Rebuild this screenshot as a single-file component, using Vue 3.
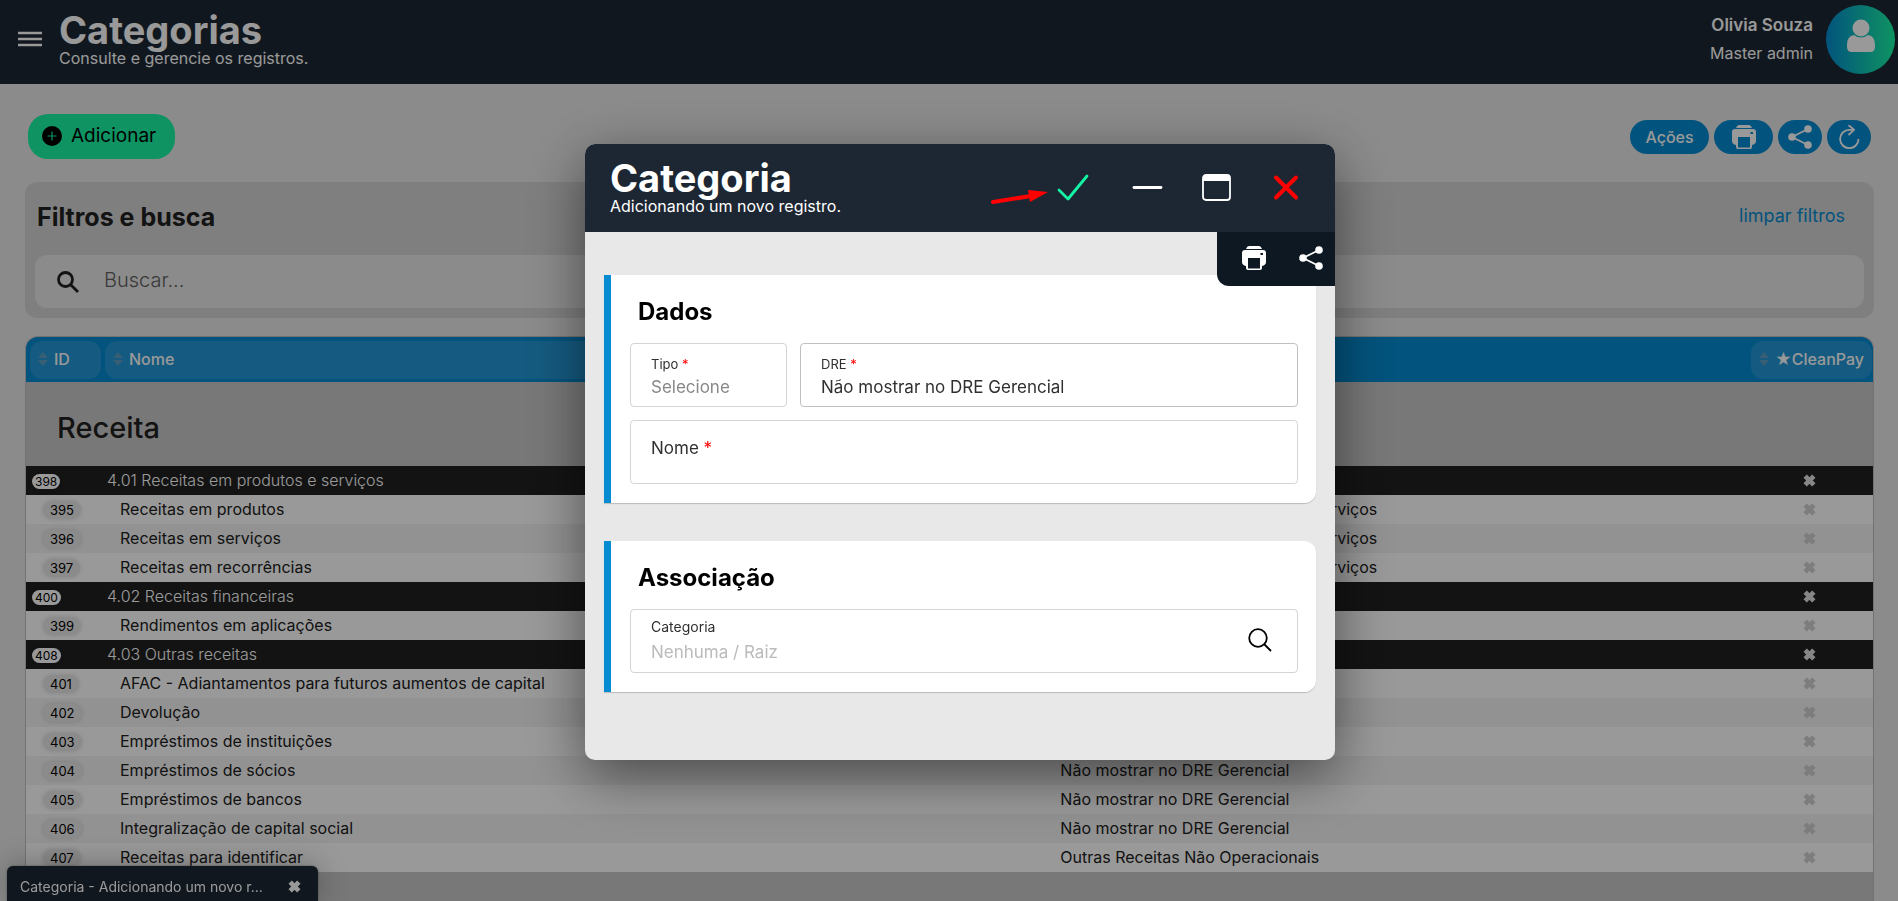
<!--============================================================ ...
    Categorias: list page + "new record" window
... ============================================================ -->

<template>
  <svg class="sprite" aria-hidden="true">
    <symbol id="i-print" viewBox="0 0 24 24">
      <path d="M4 3 Q5 0 7 0 H17 Q19 0 20 3 Z" fill="currentColor" />
      <path d="M3 4 H21 Q24 4 24 7 V16 Q24 19 20 20 V22 Q20 24 18 24 H6 Q4 24 4 22 V20 Q0 19 0 16 V7 Q0 4 3 4 Z M6 12 V22.5 H18 V12 Z M18.5 7 V9 H21 V7 Z" fill="currentColor" fill-rule="evenodd" />
    </symbol>
    <symbol id="i-share" viewBox="0 0 24 24">
      <path d="M20 4 L4 12 L20 20" fill="none" stroke="currentColor" stroke-width="1.8" />
      <circle cx="20" cy="4" r="3.8" fill="currentColor" />
      <circle cx="4" cy="12" r="3.8" fill="currentColor" />
      <circle cx="20" cy="20" r="3.8" fill="currentColor" />
    </symbol>
    <symbol id="i-times" viewBox="0 0 12 12">
      <path d="M2 2 L10 10 M10 2 L2 10" stroke="currentColor" stroke-width="4.4" />
    </symbol>
    <symbol id="i-sort" viewBox="0 0 10 14">
      <path d="M0 6 L5 0 L10 6 Z M0 8 L5 14 L10 8 Z" fill="currentColor" />
    </symbol>
  </svg>

  <div class="page">
    <header class="topbar">
      <button class="menu" aria-label="Menu">
        <svg viewBox="0 0 24 16"><path d="M0 2 H24 M0 8 H24 M0 14 H24" stroke="currentColor" stroke-width="2.4" /></svg>
      </button>
      <div class="heading">
        <h1>Categorias</h1>
        <p>Consulte e gerencie os registros.</p>
      </div>
      <div class="user">
        <strong>Olivia Souza</strong>
        <span>Master admin</span>
      </div>
      <div class="avatar">
        <svg viewBox="0 0 28 34">
          <circle cx="14" cy="9" r="8.5" fill="currentColor" />
          <path d="M7 16 Q14 21 21 16 Q28 17 28 26 V28 Q28 33 23 33 H5 Q0 33 0 28 V26 Q0 17 7 16 Z" fill="currentColor" />
        </svg>
      </div>
    </header>

    <main class="content">
      <div class="actions">
        <button class="add">
          <svg viewBox="0 0 20 20">
            <circle cx="10" cy="10" r="10" fill="#000" />
            <path d="M10 5.5 V14.5 M5.5 10 H14.5" stroke="#19f5a3" stroke-width="1.2" />
          </svg>
          Adicionar
        </button>
        <button class="pill wide">Ações</button>
        <button class="pill print" aria-label="Imprimir"><svg><use href="#i-print" /></svg></button>
        <button class="pill" aria-label="Compartilhar"><svg><use href="#i-share" /></svg></button>
        <button class="pill" aria-label="Atualizar">
          <svg viewBox="0 0 24 24" fill="none" stroke="currentColor" stroke-width="1.8">
            <path d="M21.5 14 A9.2 9.2 0 1 1 12.3 4.8 H17" />
            <path d="M11.5 0 L17 4.8 L11.5 10" />
          </svg>
        </button>
      </div>

      <section class="filters">
        <div class="filters-head">
          <h2>Filtros e busca</h2>
          <a href="#">limpar filtros</a>
        </div>
        <label class="search">
          <svg viewBox="0 0 22 22" fill="none" stroke="currentColor" stroke-width="2.8">
            <circle cx="8.5" cy="8.5" r="7" /><path d="M13.5 13.5 L21 21" />
          </svg>
          <input v-model="search" type="text" placeholder="Buscar..." aria-label="Buscar" />
        </label>
      </section>

      <div class="list">
        <table>
          <thead>
            <tr>
              <th class="col-id"><div><svg><use href="#i-sort" /></svg>ID</div></th>
              <th class="col-name"><div><svg><use href="#i-sort" /></svg>Nome</div></th>
              <th class="col-dre"><div><svg><use href="#i-sort" /></svg>DRE</div></th>
              <th class="col-pay"><div><svg><use href="#i-sort" /></svg>★CleanPay</div></th>
            </tr>
          </thead>
          <tbody>
            <tr class="root"><td colspan="4">Receita</td></tr>
            <tr v-for="row in rows" :key="row.id" :class="{ group: row.group }">
              <td><span class="badge">{{ row.id }}</span></td>
              <td class="name">{{ row.name }}</td>
              <td>{{ row.dre }}</td>
              <td class="flag"><svg><use href="#i-times" /></svg></td>
            </tr>
          </tbody>
        </table>
      </div>
    </main>

    <div class="task">
      <span>Categoria - Adicionando um novo r...</span>
      <button aria-label="Fechar"><svg><use href="#i-times" /></svg></button>
    </div>
  </div>

  <div class="overlay">
    <form class="window" @submit.prevent>
      <header class="window-head">
        <div class="heading">
          <h1>Categoria</h1>
          <p>Adicionando um novo registro.</p>
        </div>
        <div class="controls">
          <button class="save" type="submit" aria-label="Salvar">
            <svg viewBox="0 0 32 28"><path d="M2 16 L11 25 L30 2" fill="none" stroke="#14f5a5" stroke-width="2.8" stroke-linecap="round" stroke-linejoin="round" /></svg>
            <svg class="arrow" viewBox="0 0 58 18">
              <path d="M2 14 L40 8" stroke="#f00" stroke-width="4" stroke-linecap="round" />
              <path d="M37 2 L57 4 L39 14 Z" fill="#f00" />
            </svg>
          </button>
          <button type="button" aria-label="Minimizar">
            <svg viewBox="0 0 32 28"><path d="M2 13.5 H29" stroke="#fff" stroke-width="2.8" stroke-linecap="round" /></svg>
          </button>
          <button type="button" aria-label="Maximizar">
            <svg viewBox="0 0 32 28">
              <rect x="2" y="1" width="27" height="25" rx="3" fill="none" stroke="#fff" stroke-width="1.8" />
              <path d="M2 7 V4 Q2 1 5 1 H26 Q29 1 29 4 V7 Z" fill="#fff" />
            </svg>
          </button>
          <button type="button" aria-label="Fechar">
            <svg viewBox="0 0 32 28"><path d="M6 3.5 L26 23.5 M26 3.5 L6 23.5" stroke="#f00" stroke-width="4" stroke-linecap="round" /></svg>
          </button>
        </div>
      </header>

      <div class="window-body">
        <div class="tools">
          <button type="button" aria-label="Imprimir"><svg><use href="#i-print" /></svg></button>
          <button type="button" aria-label="Compartilhar"><svg><use href="#i-share" /></svg></button>
        </div>

        <fieldset class="card">
          <h2>Dados</h2>
          <div class="fields">
            <div class="field">
              <label for="tipo">Tipo <b>*</b></label>
              <select id="tipo" v-model="form.tipo" :class="{ empty: !form.tipo }">
                <option value="">Selecione</option>
                <option>Receita</option>
                <option>Despesa</option>
              </select>
            </div>
            <div class="field strong">
              <label for="dre">DRE <b>*</b></label>
              <select id="dre" v-model="form.dre">
                <option>{{ hidden }}</option>
                <option>{{ other }}</option>
              </select>
            </div>
            <div class="field inline">
              <label for="nome">Nome <b>*</b></label>
              <input id="nome" v-model="form.nome" type="text" />
            </div>
          </div>
        </fieldset>

        <fieldset class="card">
          <h2>Associação</h2>
          <div class="fields">
            <div class="field lookup">
              <div>
                <label for="categoria">Categoria</label>
                <input id="categoria" v-model="form.categoria" type="text" placeholder="Nenhuma / Raiz" />
              </div>
              <button type="button" aria-label="Procurar">
                <svg viewBox="0 0 24 24" fill="none" stroke="#000" stroke-width="1.8">
                  <circle cx="10" cy="10" r="8.8" /><path d="M16 16 L23 23" />
                </svg>
              </button>
            </div>
          </div>
        </fieldset>
      </div>
    </form>
  </div>
</template>

<script setup>
import { reactive, ref } from "vue";

const sales = "Receita de vendas de produtos e serviços";
const hidden = "Não mostrar no DRE Gerencial";
const other = "Outras Receitas Não Operacionais";

const search = ref("");

const form = reactive({
  tipo: "",
  dre: hidden,
  nome: "",
  categoria: "",
});

const rows = [
  { id: 398, name: "4.01 Receitas em produtos e serviços", group: true },
  { id: 395, name: "Receitas em produtos", dre: sales },
  { id: 396, name: "Receitas em serviços", dre: sales },
  { id: 397, name: "Receitas em recorrências", dre: sales },
  { id: 400, name: "4.02 Receitas financeiras", group: true },
  { id: 399, name: "Rendimentos em aplicações", dre: "Receitas Financeiras" },
  { id: 408, name: "4.03 Outras receitas", group: true },
  { id: 401, name: "AFAC - Adiantamentos para futuros aumentos de capital", dre: hidden },
  { id: 402, name: "Devolução", dre: hidden },
  { id: 403, name: "Empréstimos de instituições", dre: hidden },
  { id: 404, name: "Empréstimos de sócios", dre: hidden },
  { id: 405, name: "Empréstimos de bancos", dre: hidden },
  { id: 406, name: "Integralização de capital social", dre: hidden },
  { id: 407, name: "Receitas para identificar", dre: other },
];
</script>

<style>
body {
    margin: 0;
    overflow: hidden;
}
</style>

<style scoped>
.sprite {
    position: absolute;
    width: 0;
    height: 0;
}

.page, .overlay {
    font-family: Inter, "Open Sans", sans-serif;
    font-size: 16px;
    color: #202020;
}

.page *, .overlay * {
    box-sizing: border-box;
}

button {
    border: none;
    padding: 0;
    background: transparent;
    color: inherit;
    font: inherit;
    display: flex;
    align-items: center;
    justify-content: center;
}

input, select {
    border: none;
    outline: none;
    padding: 0;
    background: transparent;
    color: inherit;
    font: inherit;
    appearance: none;
}

h1, h2, p {
    margin: 0;
}

.page {
    height: 100vh;
    display: flex;
    flex-direction: column;
    overflow: hidden;
    background: #e8e8e8;
}

/* top bar */
.topbar {
    flex: none;
    display: flex;
    align-items: center;
    height: 84px;
    padding: 0 3px 6px 18px;
    background: #1d2733;
    color: #fff;
}

.menu svg {
    width: 24px;
    height: 16px;
}

.heading {
    flex: 1;
    margin-left: 17px;
}

.topbar .heading {
    padding-top: 2px;
}

.heading h1 {
    font-size: 38px;
    line-height: 36px;
    font-weight: 700;
}

.heading p {
    font-size: 16px;
    line-height: 20px;
}

.user {
    display: flex;
    flex-direction: column;
    margin-right: 13px;
    font-size: 16px;
    line-height: 28px;
    text-align: right;
}

.user strong {
    font-size: 17px;
    font-weight: 600;
}

.avatar {
    display: flex;
    align-items: center;
    justify-content: center;
    width: 69px;
    height: 69px;
    padding-bottom: 6px;
    border-radius: 50%;
    background: linear-gradient(90deg, #048bd1, #19f5a3);
}

.avatar svg {
    width: 28px;
    height: 34px;
}

/* content */
.content {
    flex: 1;
    display: flex;
    flex-direction: column;
    padding: 30px 24px 0 25px;
}

.actions {
    display: flex;
    align-items: center;
    gap: 5px;
    padding: 0 3px;
    margin-bottom: 23px;
}

.add {
    height: 45px;
    padding: 0 19px 2px 14px;
    gap: 9px;
    margin-right: auto;
    border-radius: 20px;
    background: #19f5a3;
    color: #000;
    font-size: 19px;
}

.add svg {
    width: 20px;
    height: 20px;
}

.pill {
    width: 44px;
    height: 34px;
    border-radius: 17px;
    background: #048bd1;
    color: #fff;
    font-size: 16px;
    font-weight: 500;
}

.pill svg {
    width: 24px;
    height: 24px;
}

.pill.wide {
    width: 79px;
}

.pill.print {
    width: 59px;
}

.filters {
    padding: 14px 10px 10px;
    margin-bottom: 18px;
    border-radius: 12px;
    background: #d4d4d4;
}

.filters-head {
    display: flex;
    align-items: center;
    justify-content: space-between;
    height: 42px;
    margin-bottom: 17px;
    padding: 0 19px 0 2px;
}

.filters-head h2 {
    font-size: 25px;
    font-weight: 700;
}

.filters-head a {
    padding-bottom: 3px;
    color: #048bd1;
    font-size: 18px;
    text-decoration: none;
}

.search {
    display: flex;
    align-items: center;
    gap: 25px;
    height: 53px;
    padding: 0 22px;
    border-radius: 12px;
    background: #e8e8e8;
}

.search svg {
    width: 22px;
    height: 22px;
}

.search input {
    flex: 1;
    padding-bottom: 4px;
    font-size: 20px;
    font-weight: 300;
}

.search input::placeholder {
    color: #606060;
}

/* table */
.list {
    flex: 1;
    overflow: hidden;
    border: 1px solid #c0c0c0;
    border-bottom: none;
    border-radius: 13px 13px 0 0;
    background: #c8c8c8;
}

table {
    width: 100%;
    table-layout: fixed;
    border-collapse: collapse;
}

th {
    height: 45px;
    padding: 0 2px;
    background: #048bd1;
    color: #fff;
    font-weight: 500;
    text-align: left;
}

th div {
    display: flex;
    align-items: center;
    gap: 6px;
    height: 38px;
    padding: 0 8px 1px;
    border-radius: 12px;
    background: #2397d6;
}

th svg {
    width: 10px;
    height: 14px;
    color: #5e9fc4;
}

.col-id {
    width: 77px;
    padding-left: 4px;
}

.col-name {
    width: 51.4%;
}

.col-dre div {
    width: 240px;
}

.col-pay {
    width: 124px;
    padding-right: 1px;
}

td {
    height: 29px;
    padding: 0 8px 2px;
    line-height: 20px;
    white-space: nowrap;
}

tbody tr {
    background: #fff;
}

tbody tr:nth-child(even) {
    background: #f3f3f3;
}

tbody tr.root {
    background: #c8c8c8;
}

.root td {
    height: 84px;
    padding: 8px 31px 0;
    font-size: 29px;
    font-weight: 500;
}

tbody tr.group {
    background: #202020;
    color: #fff;
}

td:first-child {
    padding-left: 17px;
}

td.name {
    padding-left: 17px;
}

.group td:first-child {
    padding-left: 6px;
}

.group td.name {
    padding-left: 4px;
    font-weight: 300;
}

.root td:first-child {
    padding-left: 31px;
}

.badge {
    display: inline-block;
    padding: 0 7px;
    border-radius: 9px;
    background: #e8e8e8;
    box-shadow: 0 0 4px rgba(0, 0, 0, .15);
    color: #000;
    font-size: 13px;
    line-height: 18px;
}

.group .badge {
    padding: 0 3px;
    background: #fff;
    font-size: 12px;
    line-height: 15px;
}

td.flag {
    padding: 0 12px 0 8px;
    color: #d0d0d0;
}

.group td.flag {
    color: #e0e0e0;
}

.flag svg, .task svg {
    display: block;
    width: 13px;
    height: 13px;
    margin: 0 auto;
}

/* minimized window */
.task {
    position: fixed;
    left: 7px;
    bottom: 0;
    display: flex;
    align-items: center;
    justify-content: space-between;
    width: 311px;
    height: 35px;
    padding: 5px 17px 0 13px;
    border-radius: 6px 6px 0 0;
    background: #1d2733;
    box-shadow: 0 0 30px rgba(0, 0, 0, .3), 0 0 2px #888;
    color: #fff;
    font-size: 14px;
}

/* window */
.overlay {
    position: fixed;
    inset: 0;
    display: grid;
    place-items: center;
    padding: 3px 0 0 22px;
    background: rgba(0, 0, 0, .4);
}

.window {
    width: 750px;
    border-radius: 10px;
    background: #e8e8e8;
    box-shadow: 0 16px 56px rgba(0, 0, 0, .5);
}

.window-head {
    display: flex;
    align-items: center;
    height: 88px;
    padding: 0 15px 0 8px;
    border-radius: 10px 10px 0 0;
    background: #1d2733;
    color: #fff;
}

.controls {
    display: flex;
}

.controls button {
    position: relative;
    width: 69px;
    height: 44px;
}

.controls svg {
    width: 32px;
    height: 28px;
}

.controls .save {
    width: 75px;
    padding-right: 6px;
}

/* points at the save button */
.controls .arrow {
    position: absolute;
    right: 64px;
    bottom: 4px;
    width: 58px;
    height: 18px;
}

.window-body {
    position: relative;
    display: flex;
    flex-direction: column;
    gap: 38px;
    padding: 43px 19px 68px;
}

.tools {
    position: absolute;
    top: 0;
    right: 0;
    display: flex;
    gap: 33px;
    height: 54px;
    padding: 0 12px 2px 25px;
    border-radius: 0 0 0 12px;
    background: #0d1823;
    color: #fff;
}

.tools svg {
    width: 24px;
    height: 24px;
}

.card {
    min-width: 0;
    margin: 0;
    padding: 17px 18px 19px 19px;
    border: none;
    border-left: 7px solid #048bd1;
    border-radius: 0 12px 12px 0;
    background: #fff;
    box-shadow: 0 1px 1px rgba(0, 0, 0, .2);
}

.card h2 {
    margin: 0 0 11px 8px;
    color: #000;
    font-size: 24px;
    font-weight: 700;
    line-height: 40px;
}

.fields {
    display: grid;
    grid-template-columns: 157px 1fr;
    gap: 13px;
}

.field {
    display: flex;
    flex-direction: column;
    justify-content: center;
    height: 64px;
    padding: 4px 20px 0;
    border: 1px solid #d4d4d4;
    border-radius: 4px;
    color: #303030;
    font-size: 17px;
}

.field.strong {
    border-color: #c0c0c0;
}

.field label {
    font-size: 13px;
    line-height: 20px;
}

.field b {
    color: #f00;
    font-weight: 400;
}

.field input, .field select {
    height: 26px;
}

.field .empty {
    color: #888;
}

.field.inline {
    grid-column: 1 / -1;
    flex-direction: row;
    align-items: center;
    justify-content: flex-start;
    gap: 8px;
    padding-top: 0;
    padding-bottom: 8px;
}

.field.inline label {
    font-size: 17px;
}

.field.inline input {
    flex: 1;
}

.field.lookup {
    grid-column: 1 / -1;
    flex-direction: row;
    align-items: center;
    padding: 0 25px 2px 20px;
}

.lookup div {
    flex: 1;
    display: flex;
    flex-direction: column;
}

.field.lookup label {
    font-size: 14px;
    line-height: 24px;
}

.lookup input::placeholder {
    color: #bbb;
}

.lookup svg {
    width: 24px;
    height: 24px;
}
</style>
